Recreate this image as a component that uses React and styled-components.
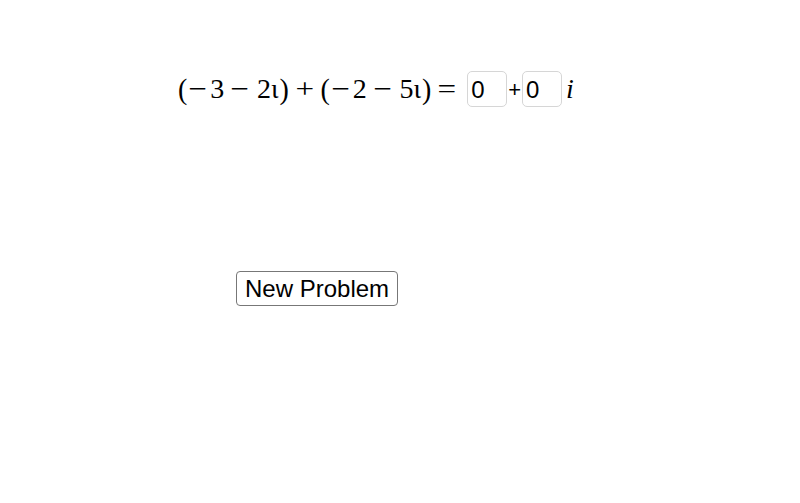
import React from 'react';
import styled, { createGlobalStyle } from 'styled-components';

const Global = createGlobalStyle`
  html, body {
    margin: 0;
    padding: 0;
    background: #ffffff;
  }
  body {
    width: 800px;
    height: 503px;
    overflow: hidden;
    font-family: "Liberation Sans", Arial, sans-serif;
    color: #000;
  }
`;

// one side of the sum: ( −a − bι )
function Term({ a, b }) {
  return (
    <>
      <Paren $r={3}>(</Paren>
      <Op $r={4}>−</Op>
      <Sym>{a}</Sym>
      <Op $l={8} $r={9}>−</Op>
      <Sym>{b}</Sym>
      <Sym>ι</Sym>
      <Paren $l={1}>)</Paren>
    </>
  );
}

function App() {
  return (
    <Page>
      <Global />
      <Equation>
        <MathRow>
          <Term a="3" b="2" />
          <Op $l={8} $r={8}>+</Op>
          <Term a="2" b="5" />
          <Op $l={8} $r={12}>=</Op>
        </MathRow>
        <AnswerBox defaultValue="0" />
        <Plus>+</Plus>
        <AnswerBox defaultValue="0" />
        <ImagUnit>i</ImagUnit>
      </Equation>

      <ButtonRow>
        <NewProblem>New Problem</NewProblem>
      </ButtonRow>
    </Page>
  );
}

export default App;

const Page = styled.div`
  width: 800px;
  height: 503px;
  display: flex;
  flex-direction: column;
`;

const Equation = styled.div`
  display: flex;
  align-items: center;
  padding: 71px 0 0 178px;
  height: 36px;
`;

const MathRow = styled.span`
  display: flex;
  align-items: center;
  font-family: "Liberation Serif", "Times New Roman", serif;
  font-size: 28px;
  line-height: 36px;
`;

const Sym = styled.span`
  display: inline-block;
`;

const Paren = styled.span`
  display: inline-block;
  margin-left: ${p => p.$l || 0}px;
  margin-right: ${p => p.$r || 0}px;
  transform: scaleY(1.08);
`;

const Op = styled.span`
  display: inline-block;
  margin-left: ${p => p.$l || 0}px;
  margin-right: ${p => p.$r || 0}px;
  transform: scaleX(1.18);
`;

const AnswerBox = styled.input`
  box-sizing: border-box;
  width: 40px;
  height: 36px;
  border: 1px solid #d6d6d6;
  border-radius: 5px;
  padding: 2px 0 0 3px;
  font-family: "Liberation Sans", Arial, sans-serif;
  font-size: 24px;
  color: #000;
  background: #fff;
  outline: none;
`;

const Plus = styled.span`
  font-family: "Liberation Sans", Arial, sans-serif;
  font-size: 22px;
  margin: 2px 1px 0;
`;

const ImagUnit = styled.span`
  font-family: "Liberation Serif", "Times New Roman", serif;
  font-style: italic;
  font-size: 28px;
  margin-left: 4px;
`;

const ButtonRow = styled.div`
  display: flex;
  padding: 164px 0 0 236px;
`;

const NewProblem = styled.button`
  box-sizing: border-box;
  height: 35px;
  padding: 0 8px;
  border: 1px solid #777;
  border-radius: 4px;
  background: #fff;
  font-family: "Liberation Sans", Arial, sans-serif;
  font-size: 24px;
  color: #000;
  cursor: pointer;
`;
